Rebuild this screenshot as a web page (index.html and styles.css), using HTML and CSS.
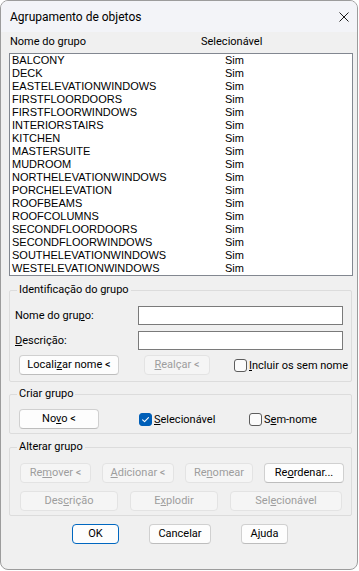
FILE: index.html
```html
<!DOCTYPE html>
<html>
<head>
    <meta charset="utf-8">
    <title>Agrupamento de objetos</title>
    <meta name="viewport" content="width=device-width, initial-scale=1.0">
    <link rel="stylesheet" href="styles.css">
</head>
<body>
    <div class="window">
        <div class="titlebar">
            <span class="title">Agrupamento de objetos</span>
            <span class="close">
                <svg width="10" height="10" viewBox="0 0 10 10"><path d="M0.5 0.5 L9.5 9.5 M9.5 0.5 L0.5 9.5" stroke="#1b1b1b" stroke-width="1" fill="none"/></svg>
            </span>
        </div>

        <div class="content">
            <div class="list-head">
                <span class="col-name">Nome do <u>g</u>rupo</span>
                <span>Selecionável</span>
            </div>

            <div class="list">
                <div class="row"><span class="col-name">BALCONY</span><span>Sim</span></div>
                <div class="row"><span class="col-name">DECK</span><span>Sim</span></div>
                <div class="row"><span class="col-name">EASTELEVATIONWINDOWS</span><span>Sim</span></div>
                <div class="row"><span class="col-name">FIRSTFLOORDOORS</span><span>Sim</span></div>
                <div class="row"><span class="col-name">FIRSTFLOORWINDOWS</span><span>Sim</span></div>
                <div class="row"><span class="col-name">INTERIORSTAIRS</span><span>Sim</span></div>
                <div class="row"><span class="col-name">KITCHEN</span><span>Sim</span></div>
                <div class="row"><span class="col-name">MASTERSUITE</span><span>Sim</span></div>
                <div class="row"><span class="col-name">MUDROOM</span><span>Sim</span></div>
                <div class="row"><span class="col-name">NORTHELEVATIONWINDOWS</span><span>Sim</span></div>
                <div class="row"><span class="col-name">PORCHELEVATION</span><span>Sim</span></div>
                <div class="row"><span class="col-name">ROOFBEAMS</span><span>Sim</span></div>
                <div class="row"><span class="col-name">ROOFCOLUMNS</span><span>Sim</span></div>
                <div class="row"><span class="col-name">SECONDFLOORDOORS</span><span>Sim</span></div>
                <div class="row"><span class="col-name">SECONDFLOORWINDOWS</span><span>Sim</span></div>
                <div class="row"><span class="col-name">SOUTHELEVATIONWINDOWS</span><span>Sim</span></div>
                <div class="row"><span class="col-name">WESTELEVATIONWINDOWS</span><span>Sim</span></div>
            </div>

            <fieldset class="group group-id">
                <legend>Identificação do grupo</legend>
                <div class="field">
                    <label>Nome do gru<u>p</u>o:</label>
                    <input type="text" class="input">
                </div>
                <div class="field field-next">
                    <label><u>D</u>escrição:</label>
                    <input type="text" class="input">
                </div>
                <div class="btn-row id-buttons">
                    <button class="btn btn-find">Locali<u>z</u>ar nome &lt;</button>
                    <button class="btn btn-highlight" disabled><u>R</u>ealçar &lt;</button>
                    <label class="check check-unnamed"><span class="box"></span><span><u>I</u>ncluir os sem nome</span></label>
                </div>
            </fieldset>

            <fieldset class="group group-create">
                <legend>Criar grupo</legend>
                <div class="btn-row">
                    <button class="btn btn-new">No<u>v</u>o &lt;</button>
                    <label class="check check-selectable"><span class="box checked"><svg width="13" height="13" viewBox="0 0 13 13"><path d="M3.6 6.8 L5.6 8.7 L9.5 4.6" stroke="#fff" stroke-width="1.1" fill="none" stroke-linecap="round" stroke-linejoin="round"/></svg></span><span><u>S</u>elecionável</span></label>
                    <label class="check"><span class="box"></span><span>S<u>e</u>m-nome</span></label>
                </div>
            </fieldset>

            <fieldset class="group group-change">
                <legend>Alterar grupo</legend>
                <div class="btn-grid change-row-1">
                    <button class="btn" disabled>Re<u>m</u>over &lt;</button>
                    <button class="btn" disabled><u>A</u>dicionar &lt;</button>
                    <button class="btn" disabled>Re<u>n</u>omear</button>
                    <button class="btn">Re<u>o</u>rdenar...</button>
                </div>
                <div class="btn-grid change-row-2">
                    <button class="btn" disabled>Des<u>c</u>rição</button>
                    <button class="btn" disabled>E<u>x</u>plodir</button>
                    <button class="btn" disabled>Sel<u>e</u>cionável</button>
                </div>
            </fieldset>

            <div class="actions">
                <button class="btn btn-ok">OK</button>
                <button class="btn btn-cancel">Cancelar</button>
                <button class="btn btn-help">A<u>j</u>uda</button>
            </div>
        </div>
    </div>
</body>
</html>
```

FILE: styles.css
```css
body { margin: 0; background: #ffffff; font-family: Roboto, "Liberation Sans", sans-serif; font-size: 11px; color: #000; }
.window { width: 358px; height: 570px; box-sizing: border-box; border: 1px solid #9c9c9c; border-radius: 8px; background: #f0f0f0; overflow: hidden; }

/* title bar */
.titlebar { height: 31px; background: #f3f4f8; display: flex; align-items: center; justify-content: space-between; padding-left: 9px; }
.title { font-size: 12px; }
.close { display: flex; margin-right: 8px; }

.content { padding: 2px 4px 0 8px; }

/* list */
.list-head { display: flex; height: 16px; line-height: 16px; padding-left: 1px; margin-bottom: 3px; }
.list-head .col-name { width: 191px; }
.list { height: 223px; box-sizing: border-box; border: 1px solid #828790; background: #fff; padding-left: 2px; font-family: "Liberation Sans", Arial, sans-serif; font-size: 11px; }
.row { display: flex; height: 13px; line-height: 13px; }
.row .col-name { width: 213px; }

/* group boxes */
.group { margin: 0 1px 0 0; border: 1px solid #dcdcdc; border-radius: 2px; padding: 0; min-width: 0; }
.group legend { margin-left: 7px; padding: 0 2px; line-height: 16px; }
.group-id { margin-top: 6px; padding: 8px 0 6px 0; }
.group-create { margin-top: 4px; padding: 7px 0 4px 0; }
.group-change { margin-top: 5px; padding: 8px 0 4px 0; }

.field { display: flex; align-items: center; height: 19px; }
.field-next { margin-top: 6px; }
.field label { width: 123px; padding-left: 5px; }
.input { width: 205px; height: 19px; box-sizing: border-box; border: 1px solid #7a7a7a; background: #fff; margin: 0; padding: 0 3px; font: inherit; }

.btn-row { display: flex; align-items: center; }
.id-buttons { margin-top: 5px; }

/* buttons */
.btn { height: 20px; box-sizing: border-box; padding: 0; margin: 0; border: 1px solid #d0d0d0; border-bottom-color: #bdbdbd; border-radius: 4px; background: #fdfdfd; font: inherit; color: #000; line-height: 18px; white-space: nowrap; }
.btn:disabled { background: #f5f5f5; border-color: #e3e3e3; color: #9d9d9d; }
.btn-find { width: 100px; margin-left: 9px; }
.btn-highlight { width: 66px; margin-left: 25px; }
.btn-new { width: 80px; margin-left: 9px; }

.btn-grid { display: grid; margin-left: 10px; }
.change-row-1 { grid-template-columns: 71px 72px 68px 80px; column-gap: 11px; }
.change-row-2 { grid-template-columns: 98px 88px 112px; column-gap: 12px; margin-top: 8px; }

/* checkboxes */
.check { display: flex; align-items: center; gap: 2px; white-space: nowrap; }
.check-unnamed { margin-left: 24px; }
.check-selectable { margin-left: 40px; width: 110px; }
.box { width: 13px; height: 13px; box-sizing: border-box; border: 1px solid #5c5c5c; border-radius: 3px; background: #fbfbfb; display: flex; flex: none; }
.box.checked { background: #005fb8; border-color: #005fb8; }
.box.checked svg { margin: -1px; }

/* dialog buttons */
.actions { display: flex; margin-top: 8px; padding-left: 63px; gap: 30px; }
.btn-ok { width: 47px; border-color: #0067c0; }
.btn-cancel { width: 62px; }
.btn-help { width: 47px; }
```
